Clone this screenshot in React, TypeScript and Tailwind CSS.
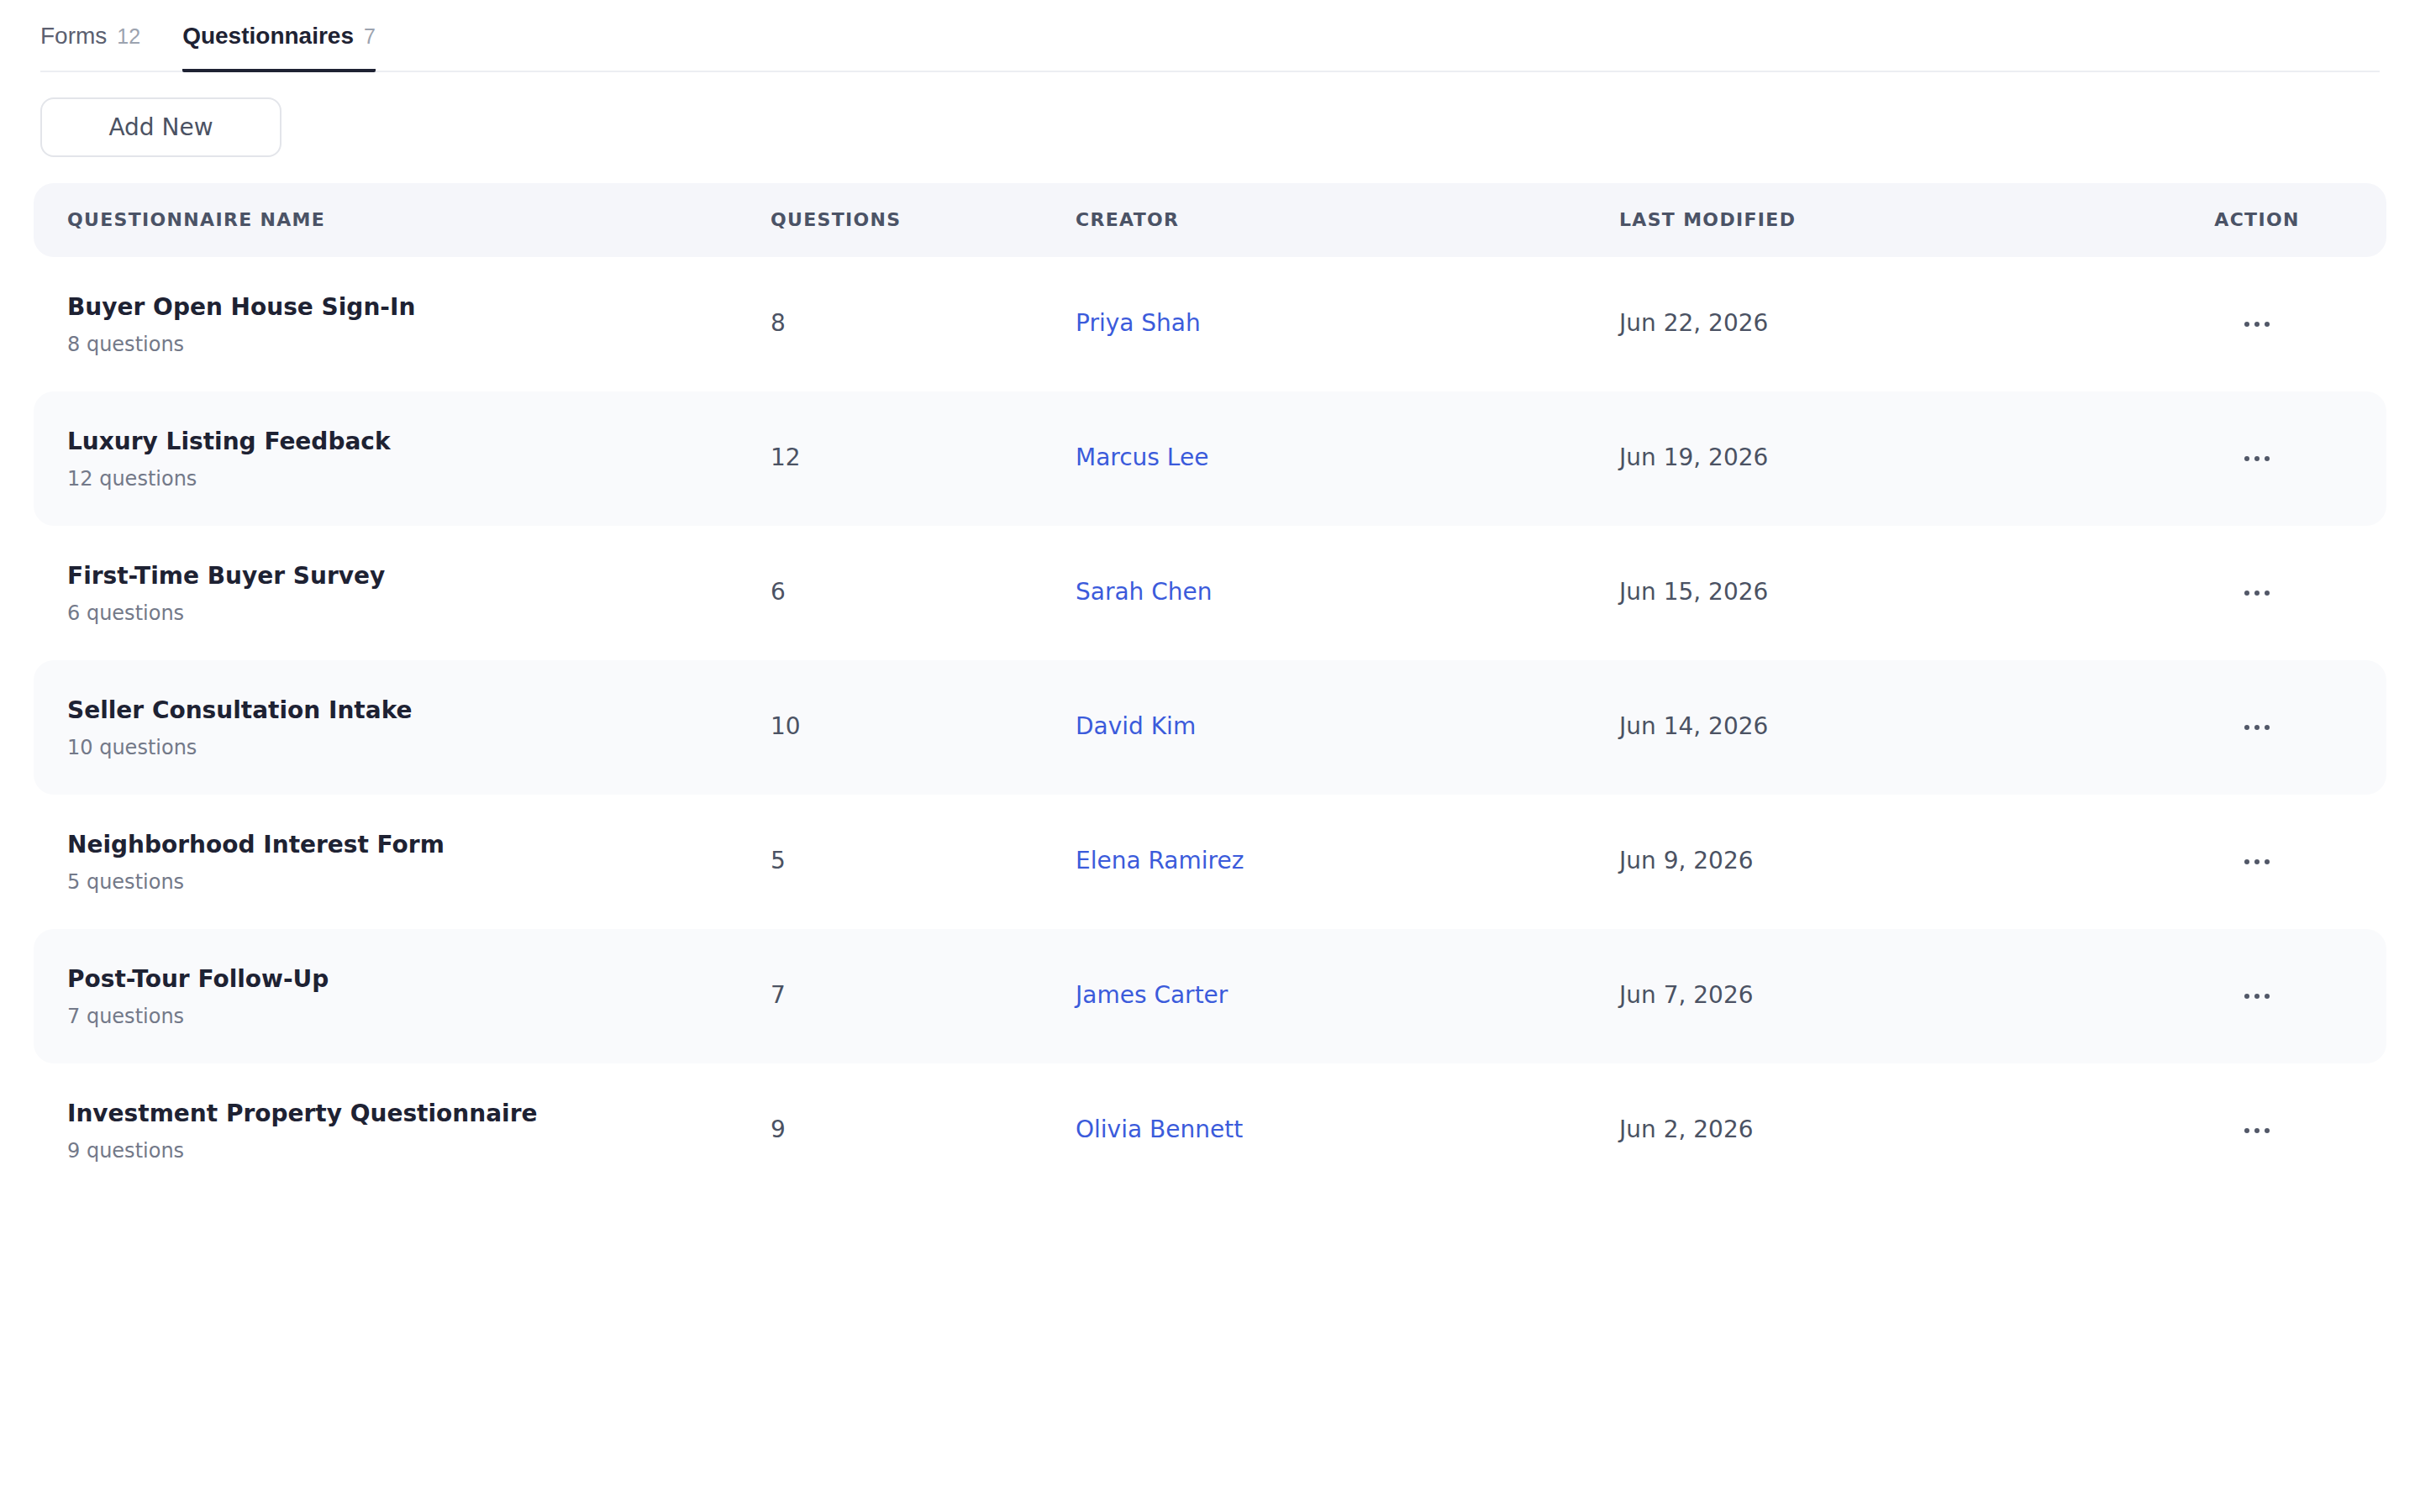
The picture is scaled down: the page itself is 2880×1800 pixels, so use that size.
import React from "react";

type Row = {
  name: string;
  count: number;
  creator: string;
  date: string;
};

const rows: Row[] = [
  { name: "Buyer Open House Sign-In", count: 8, creator: "Priya Shah", date: "Jun 22, 2026" },
  { name: "Luxury Listing Feedback", count: 12, creator: "Marcus Lee", date: "Jun 19, 2026" },
  { name: "First-Time Buyer Survey", count: 6, creator: "Sarah Chen", date: "Jun 15, 2026" },
  { name: "Seller Consultation Intake", count: 10, creator: "David Kim", date: "Jun 14, 2026" },
  { name: "Neighborhood Interest Form", count: 5, creator: "Elena Ramirez", date: "Jun 9, 2026" },
  { name: "Post-Tour Follow-Up", count: 7, creator: "James Carter", date: "Jun 7, 2026" },
  { name: "Investment Property Questionnaire", count: 9, creator: "Olivia Bennett", date: "Jun 2, 2026" },
];

function Dots() {
  return (
    <button type="button" className="mx-auto flex items-center justify-center gap-[6px] p-2">
      <span className="block h-[6px] w-[6px] rounded-full bg-[#525868]" />
      <span className="block h-[6px] w-[6px] rounded-full bg-[#525868]" />
      <span className="block h-[6px] w-[6px] rounded-full bg-[#525868]" />
    </button>
  );
}

export default function App() {
  return (
    <div className="min-h-screen bg-white px-10 font-['DejaVu_Sans',sans-serif]">
      {/* Tabs */}
      <div className="mx-2 flex items-end gap-[50px] border-b-2 border-[#eceef2] font-['Liberation_Sans',Arial,sans-serif]">
        <div className="-mb-[2px] flex items-baseline gap-3 border-b-4 border-transparent pt-[23px] pb-[19px]">
          <span className="text-[28px] leading-[40px] text-[#5b6070]">Forms</span>
          <span className="text-[25px] leading-[32px] text-[#9ca3af]">12</span>
        </div>
        <div className="-mb-[2px] flex items-baseline gap-3 rounded-b-[2px] border-b-4 border-[#1e2233] pt-[23px] pb-[19px]">
          <span className="text-[28px] font-bold leading-[40px] text-[#1e2233]">Questionnaires</span>
          <span className="text-[25px] leading-[32px] text-[#9ca3af]">7</span>
        </div>
      </div>

      {/* Add New */}
      <div className="mt-[30px] ml-2">
        <button
          type="button"
          className="flex h-[71px] w-[287px] items-center justify-center rounded-[16px] border-2 border-[#e3e5ea] bg-white text-[28px] leading-[40px] text-[#4b5263]"
        >
          Add New
        </button>
      </div>

      {/* Table */}
      <div className="mt-[31px]">
        <div className="grid h-[88px] grid-cols-[837px_363px_647px_645px_228px] items-center rounded-[24px] bg-[#f5f6fa] px-10 pb-[2px] text-[22px] font-bold uppercase tracking-[0.06em] text-[#4b5366]">
          <div>Questionnaire Name</div>
          <div>Questions</div>
          <div>Creator</div>
          <div>Last Modified</div>
          <div className="text-center">Action</div>
        </div>

        {rows.map((r, i) => (
          <div
            key={r.name}
            className={
              i % 2 === 1
                ? "grid h-[160px] grid-cols-[837px_363px_647px_645px_228px] items-center rounded-[24px] bg-[#f9fafc] px-10"
                : "grid h-[160px] grid-cols-[837px_363px_647px_645px_228px] items-center rounded-[24px] bg-white px-10"
            }
          >
            <div className="flex flex-col">
              <span className="text-[28px] font-bold leading-[40px] text-[#1e2233]">{r.name}</span>
              <span className="mt-2 text-[24px] leading-[32px] text-[#737989]">{r.count} questions</span>
            </div>
            <div className="pb-[2px] text-[28px] leading-[40px] text-[#4b5263]">{r.count}</div>
            <div className="pb-[2px] text-[28px] leading-[40px] text-[#3b5bdb]">
              <a href="#" className="text-[#3b5bdb]">{r.creator}</a>
            </div>
            <div className="pb-[2px] text-[28px] leading-[40px] text-[#4b5263]">{r.date}</div>
            <div className="flex justify-center">
              <Dots />
            </div>
          </div>
        ))}
      </div>
    </div>
  );
}
